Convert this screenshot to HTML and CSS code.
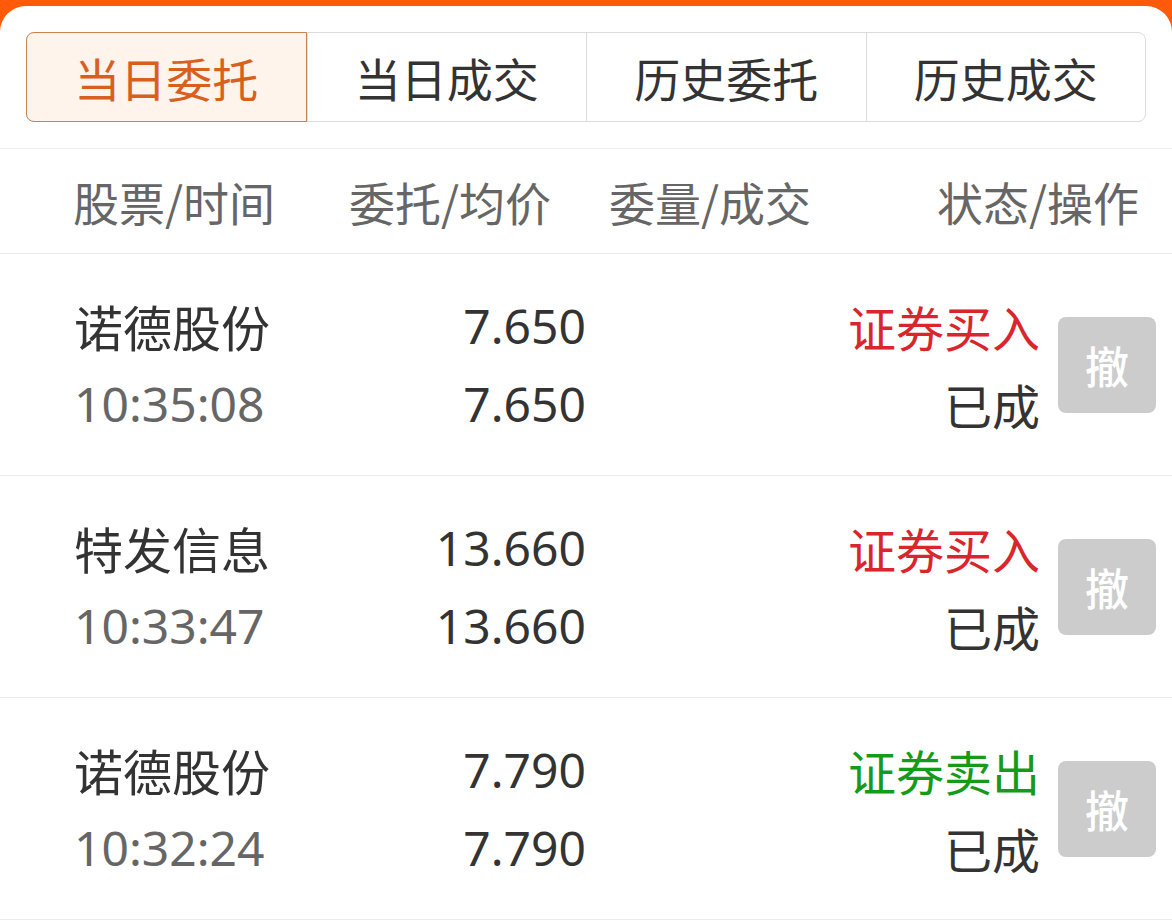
FILE: index.html
```html
<!DOCTYPE html>
<html lang="zh-CN">
<head>
<meta charset="utf-8">
<title>当日委托</title>
<link rel="stylesheet" href="styles.css">
</head>
<body>
<div class="card">
  <div class="tabs">
    <div class="tab active">当日委托</div>
    <div class="tab">当日成交</div>
    <div class="tab">历史委托</div>
    <div class="tab">历史成交</div>
  </div>
  <div class="head">
    <div class="h1">股票/时间</div>
    <div class="h2">委托/均价</div>
    <div class="h3">委量/成交</div>
    <div class="h4">状态/操作</div>
  </div>
  <div class="row">
    <div class="c1"><div class="name">诺德股份</div><div class="time">10:35:08</div></div>
    <div class="c2"><div>7.650</div><div>7.650</div></div>
    <div class="c3"></div>
    <div class="c4"><div class="buy">证券买入</div><div>已成</div></div>
    <div class="btn">撤</div>
  </div>
  <div class="row">
    <div class="c1"><div class="name">特发信息</div><div class="time">10:33:47</div></div>
    <div class="c2"><div>13.660</div><div>13.660</div></div>
    <div class="c3"></div>
    <div class="c4"><div class="buy">证券买入</div><div>已成</div></div>
    <div class="btn">撤</div>
  </div>
  <div class="row">
    <div class="c1"><div class="name">诺德股份</div><div class="time">10:32:24</div></div>
    <div class="c2"><div>7.790</div><div>7.790</div></div>
    <div class="c3"></div>
    <div class="c4"><div class="sell">证券卖出</div><div>已成</div></div>
    <div class="btn">撤</div>
  </div>
</div>
</body>
</html>
```

FILE: styles.css
```css
html, body {
  margin: 0;
  padding: 0;
  background: #ff5a0a;
  height: 100%;
  overflow: hidden;
}
body {
  font-family: "Noto Sans", "Noto Sans CJK SC", sans-serif;
  color: #333;
}
.card {
  margin-top: 6px;
  background: #fff;
  border-radius: 26px 26px 0 0;
  min-height: 918px;
  padding-top: 26px;
  box-sizing: border-box;
}
.tabs {
  display: flex;
  margin: 0 26px;
  height: 90px;
  border: 1px solid #dcdcdc;
  border-radius: 8px;
  box-sizing: border-box;
}
.tab {
  flex: 1;
  display: flex;
  align-items: center;
  justify-content: center;
  font-family: "Noto Sans CJK SC", sans-serif;
  font-size: 46px;
  color: #333;
  border-left: 1px solid #dcdcdc;
}
.tab:first-child { border-left: none; }
.tab.active {
  background: #fff4ec;
  color: #d8601e;
  border: 1px solid #c9834d;
  margin: -1px 0 -1px -1px;
  border-radius: 8px 0 0 8px;
}
.head {
  margin-top: 26px;
  border-top: 1px solid #f0f0f0;
  border-bottom: 1px solid #ebebeb;
  height: 104px;
  display: grid;
  grid-template-columns: 300px 300px 220px 1fr;
  align-items: center;
  font-family: "Noto Sans CJK SC", sans-serif;
  font-size: 46px;
  color: #666;
}
.h1 { padding-left: 73px; }
.h2, .h3 { text-align: center; }
.h4 { text-align: right; padding-right: 33px; }
.row {
  height: 222px;
  box-sizing: border-box;
  border-bottom: 1px solid #ebebeb;
  display: flex;
  align-items: center;
  font-size: 48px;
  line-height: 78px;
}
.c1 { width: 300px; padding-left: 74px; box-sizing: border-box; }
.name { font-family: "Noto Sans CJK SC", sans-serif; color: #333; font-size: 49px; }
.time { color: #666; }
.c2 { width: 286px; text-align: right; color: #333; }
.c3 { flex: 1; }
.c4 { text-align: right; font-family: "Noto Sans CJK SC", sans-serif; color: #333; }
.buy { color: #d9262c; }
.sell { color: #169a1a; }
.btn {
  width: 98px;
  height: 96px;
  margin: 0 16px 0 18px;
  background: #cccccc;
  border-radius: 8px;
  color: #fff;
  font-family: "Noto Sans CJK SC", sans-serif;
  font-size: 44px;
  font-weight: 500;
  display: flex;
  align-items: center;
  justify-content: center;
}
```
